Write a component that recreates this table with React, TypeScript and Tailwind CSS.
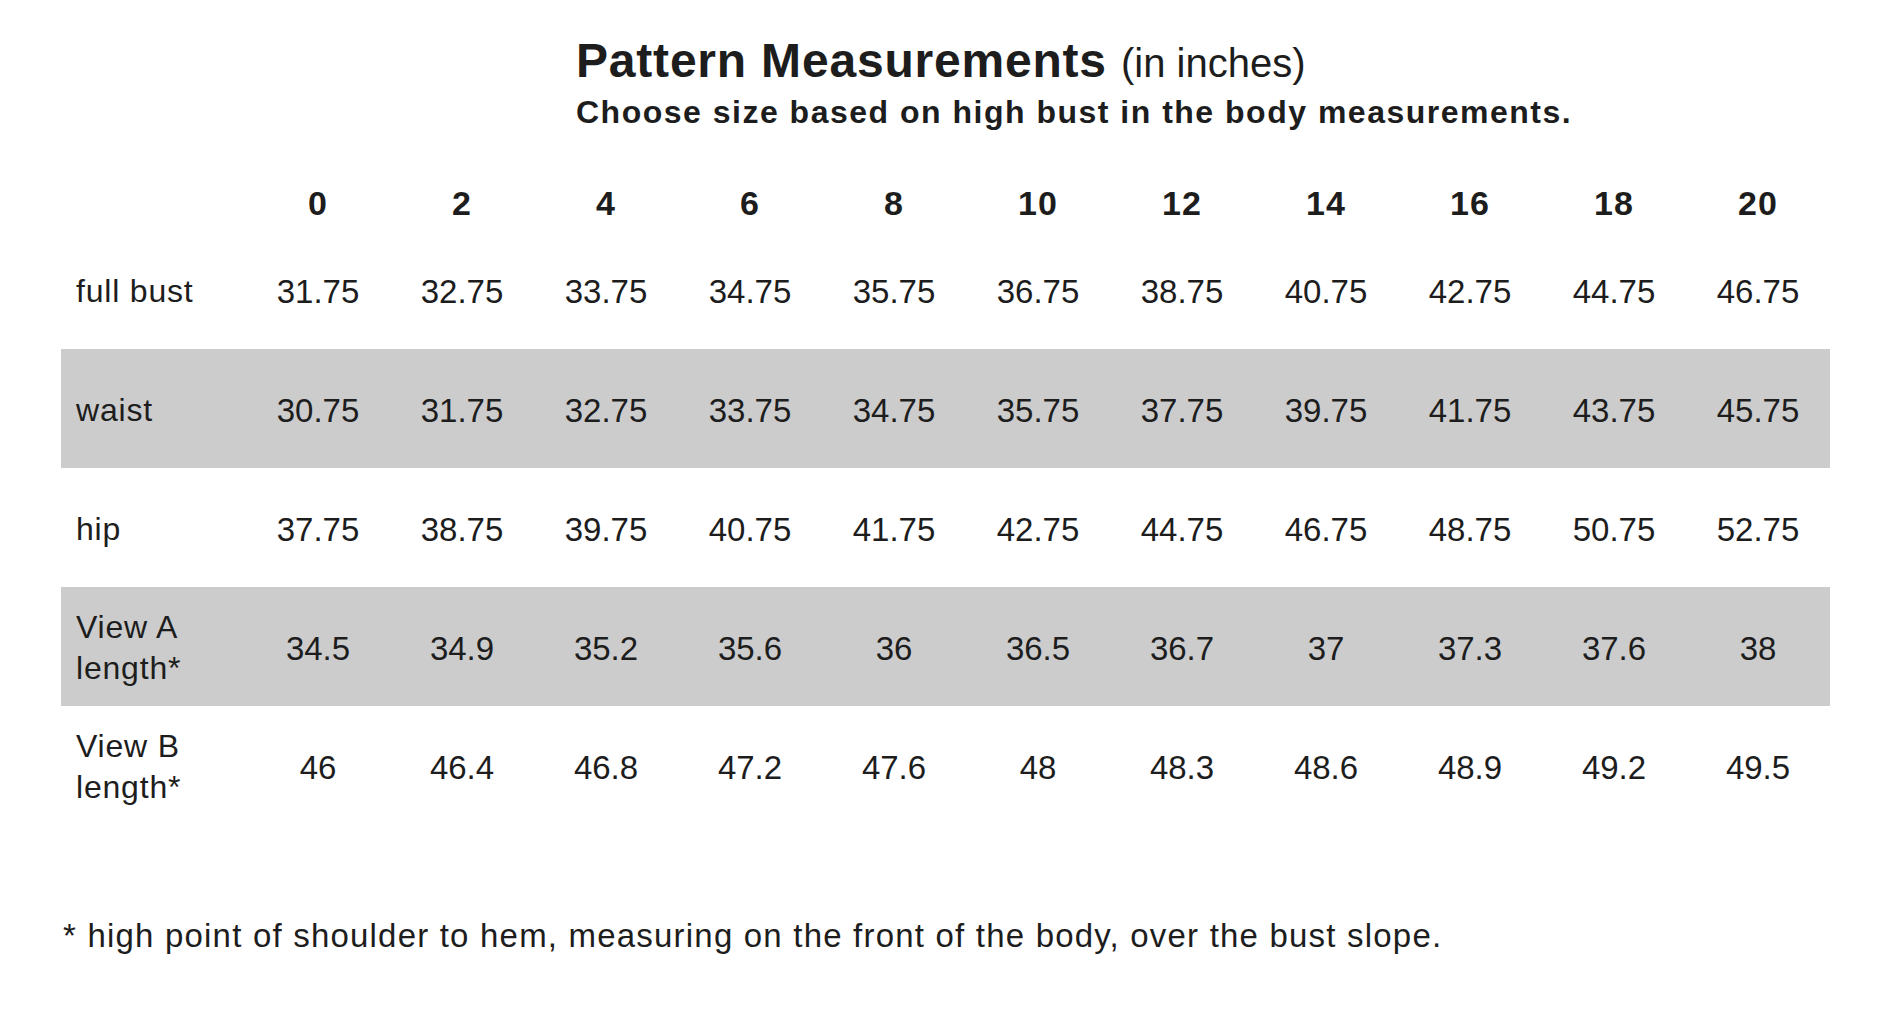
import React from "react";

const sizes = ["0", "2", "4", "6", "8", "10", "12", "14", "16", "18", "20"];

type Row = { label: string[]; values: string[]; shaded: boolean };

const rows: Row[] = [
  {
    label: ["full bust"],
    values: ["31.75", "32.75", "33.75", "34.75", "35.75", "36.75", "38.75", "40.75", "42.75", "44.75", "46.75"],
    shaded: false,
  },
  {
    label: ["waist"],
    values: ["30.75", "31.75", "32.75", "33.75", "34.75", "35.75", "37.75", "39.75", "41.75", "43.75", "45.75"],
    shaded: true,
  },
  {
    label: ["hip"],
    values: ["37.75", "38.75", "39.75", "40.75", "41.75", "42.75", "44.75", "46.75", "48.75", "50.75", "52.75"],
    shaded: false,
  },
  {
    label: ["View A", "length*"],
    values: ["34.5", "34.9", "35.2", "35.6", "36", "36.5", "36.7", "37", "37.3", "37.6", "38"],
    shaded: true,
  },
  {
    label: ["View B", "length*"],
    values: ["46", "46.4", "46.8", "47.2", "47.6", "48", "48.3", "48.6", "48.9", "49.2", "49.5"],
    shaded: false,
  },
];

export default function App() {
  return (
    <div
      className="min-h-screen w-full bg-white text-[#1d1d1d]"
      style={{ fontFamily: '"Liberation Sans", Arial, sans-serif' }}
    >
      <div className="pt-[37px] pl-[576px]">
        <h1 className="text-[48px] leading-[48px] font-bold tracking-[0.8px] whitespace-nowrap">
          Pattern Measurements{" "}
          <span className="text-[40px] font-normal tracking-[0px]">(in inches)</span>
        </h1>
        <p className="mt-[9px] text-[32px] leading-[32px] font-bold tracking-[1.5px] whitespace-nowrap">
          Choose size based on high bust in the body measurements.
        </p>
      </div>

      <div className="mt-[51px] ml-[61px] w-[1769px]">
        <div className="grid grid-cols-[185px_repeat(11,144px)] h-[51px] items-center pb-[3px]">
          <div />
          {sizes.map((s) => (
            <div key={s} className="text-center text-[34px] leading-[34px] font-bold tracking-[1px]">
              {s}
            </div>
          ))}
        </div>

        {rows.map((r, i) => (
          <div
            key={i}
            className={`grid grid-cols-[185px_repeat(11,144px)] h-[119px] items-center pt-[3px] ${
              r.shaded ? "bg-[#cccccc]" : "bg-white"
            }`}
          >
            <div className="pl-[15px] text-[32px] leading-[41px] tracking-[0.8px]">
              {r.label.map((l) => (
                <div key={l}>{l}</div>
              ))}
            </div>
            {r.values.map((v, j) => (
              <div key={j} className="text-center text-[33px] leading-[41px]">
                {v}
              </div>
            ))}
          </div>
        ))}
      </div>

      <p className="mt-[94px] ml-[63px] text-[33px] leading-[33px] tracking-[1.2px] whitespace-nowrap">
        * high point of shoulder to hem, measuring on the front of the body, over the bust slope.
      </p>
    </div>
  );
}
